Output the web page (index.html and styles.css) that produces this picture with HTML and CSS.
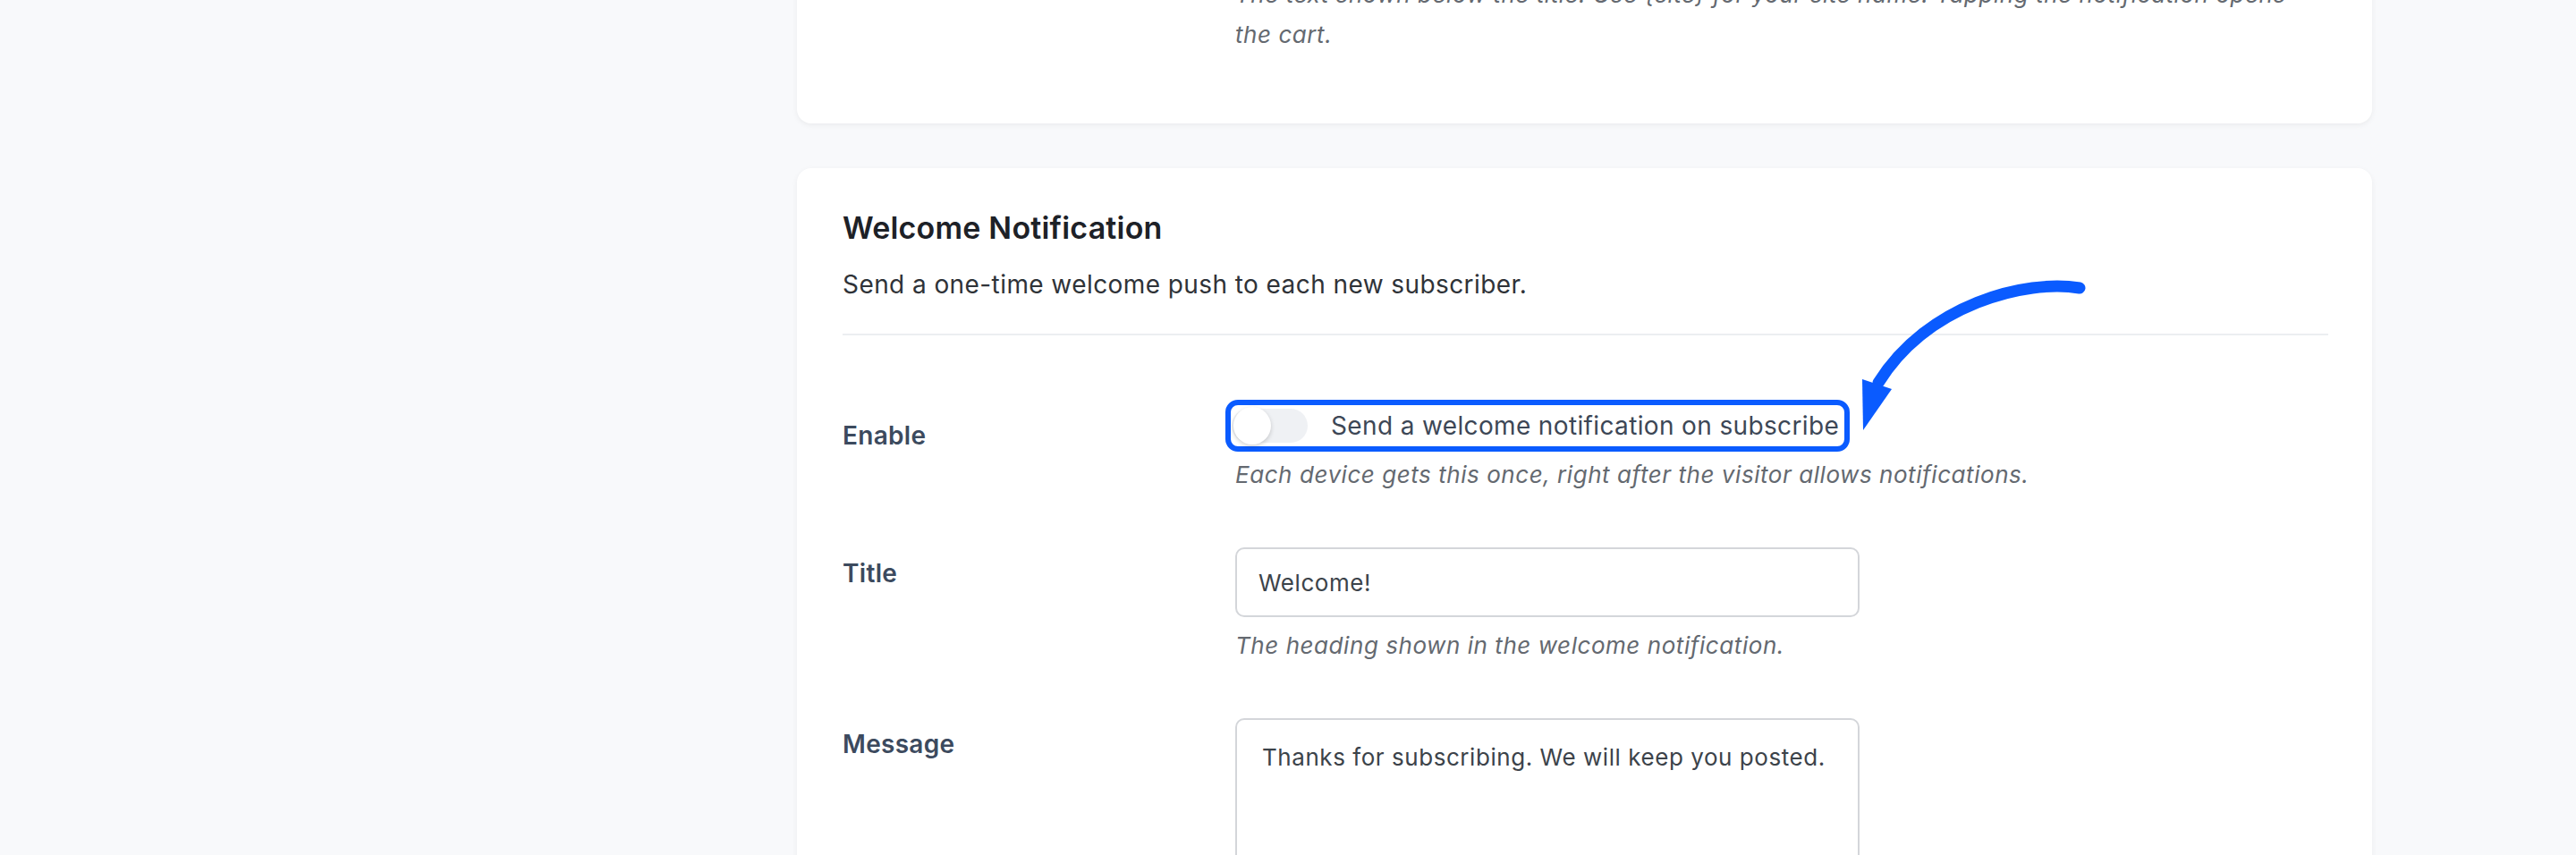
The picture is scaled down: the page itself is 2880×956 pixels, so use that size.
FILE: index.html
```html
<!DOCTYPE html>
<html lang="en">
<head>
    <meta charset="UTF-8">
    <meta name="viewport" content="width=device-width, initial-scale=1.0">
    <title>Push Notifications Settings</title>
    <link rel="stylesheet" href="styles.css">
</head>
<body>
    <div class="page">
        <aside class="sidebar"></aside>

        <main class="content">
            <section class="card card-prev">
                <div class="field">
                    <div class="field-label"></div>
                    <div class="field-body">
                        <p class="hint hint-wrap">The text shown below the title. Use {site} for your site name. Tapping the notification opens the cart.</p>
                    </div>
                </div>
            </section>

            <section class="card">
                <h2 class="card-title">Welcome Notification</h2>
                <p class="card-intro">Send a one-time welcome push to each new subscriber.</p>

                <div class="fields">
                    <div class="field field-toggle">
                        <div class="field-label">Enable</div>
                        <div class="field-body">
                            <label class="toggle">
                                <span class="switch"><span class="knob"></span></span>
                                Send a welcome notification on subscribe
                            </label>
                            <p class="hint">Each device gets this once, right after the visitor allows notifications.</p>
                        </div>
                    </div>

                    <div class="field">
                        <div class="field-label">Title</div>
                        <div class="field-body">
                            <input class="text-input" type="text" value="Welcome!">
                            <p class="hint">The heading shown in the welcome notification.</p>
                        </div>
                    </div>

                    <div class="field">
                        <div class="field-label">Message</div>
                        <div class="field-body">
                            <textarea class="text-area">Thanks for subscribing. We will keep you posted.</textarea>
                        </div>
                    </div>
                </div>
            </section>
        </main>
    </div>

    <!-- annotation arrow pointing at the toggle -->
    <svg class="arrow" width="290" height="200" viewBox="0 0 290 200">
        <path d="M265 22 C 205 12, 95 40, 40 128" fill="none" stroke="#0a5bff" stroke-width="13" stroke-linecap="round"/>
        <polygon points="22,124 55,135 23,181" fill="#0a5bff"/>
    </svg>
</body>
</html>
```

FILE: styles.css
```css
body {
    margin: 0;
    height: 956px;
    overflow: hidden;
    background: #f8f9fb;
    font-family: Inter, "Liberation Sans", sans-serif;
    color: #1e2126;
}

.page {
    display: grid;
    grid-template-columns: 891px 1761px;
}

.content {
    display: flex;
    flex-direction: column;
    gap: 50px;
}

.card {
    background: #fff;
    border-radius: 16px;
    box-shadow: 0 2px 6px rgba(0, 0, 0, 0.06);
    padding: 45px 49px 0 51px;
}

.card-prev {
    margin-top: -29px;
    padding-top: 0;
    padding-bottom: 77px;
    border-radius: 0 0 16px 16px;
}

.card-title {
    margin: 0;
    font-size: 34px;
    font-weight: 600;
    line-height: 44px;
    letter-spacing: 0.2px;
    color: #1d2127;
}

.card-intro {
    margin: 20px 0 0;
    font-size: 28px;
    line-height: 42px;
    letter-spacing: 0.42px;
    color: #2f3338;
}

.fields {
    margin-top: 34px;
    border-top: 2px solid #eceef1;
    padding-top: 78px;
    display: flex;
    flex-direction: column;
    gap: 62px;
}

.field {
    display: grid;
    grid-template-columns: 439px 1fr;
    align-items: start;
}

.field-label {
    padding-top: 10px;
    font-size: 28px;
    font-weight: 600;
    line-height: 39px;
    letter-spacing: 0.3px;
    color: #3c4a5e;
}

.field-toggle .field-label {
    padding-top: 15px;
}

.field-body {
    display: flex;
    flex-direction: column;
    align-items: flex-start;
}

.hint {
    margin: 12px 0 0;
    font-size: 26px;
    font-style: italic;
    line-height: 39px;
    letter-spacing: 0.55px;
    color: #646970;
}

.hint-wrap {
    margin: 0;
    line-height: 45px;
    max-width: 1200px;
}

.toggle {
    display: inline-flex;
    align-items: center;
    gap: 26px;
    height: 46px;
    margin-left: -5px;
    padding: 0 6px 0 1px;
    border-radius: 8px;
    outline: 6px solid #0a5bff;
    font-size: 28px;
    letter-spacing: 0.36px;
    color: #3d4756;
    cursor: pointer;
}

.switch {
    position: relative;
    width: 85px;
    height: 38px;
    border-radius: 19px;
    background: #eff1f4;
}

.knob {
    position: absolute;
    top: -2px;
    left: 2px;
    width: 42px;
    height: 42px;
    border-radius: 50%;
    background: #fff;
    box-shadow: 0 2px 5px rgba(0, 0, 0, 0.18);
}

.text-input,
.text-area {
    box-sizing: border-box;
    width: 698px;
    border: 2px solid #d4d6da;
    border-radius: 10px;
    background: #fff;
    font-family: Inter, "Liberation Sans", sans-serif;
    font-size: 26px;
    letter-spacing: 0.55px;
    color: #3c434a;
}

.text-input {
    height: 78px;
    padding: 0 24px;
}

.text-area {
    height: 320px;
    padding: 22px 28px;
    line-height: 39px;
    resize: none;
}

.arrow {
    position: absolute;
    left: 2060px;
    top: 300px;
}
```
